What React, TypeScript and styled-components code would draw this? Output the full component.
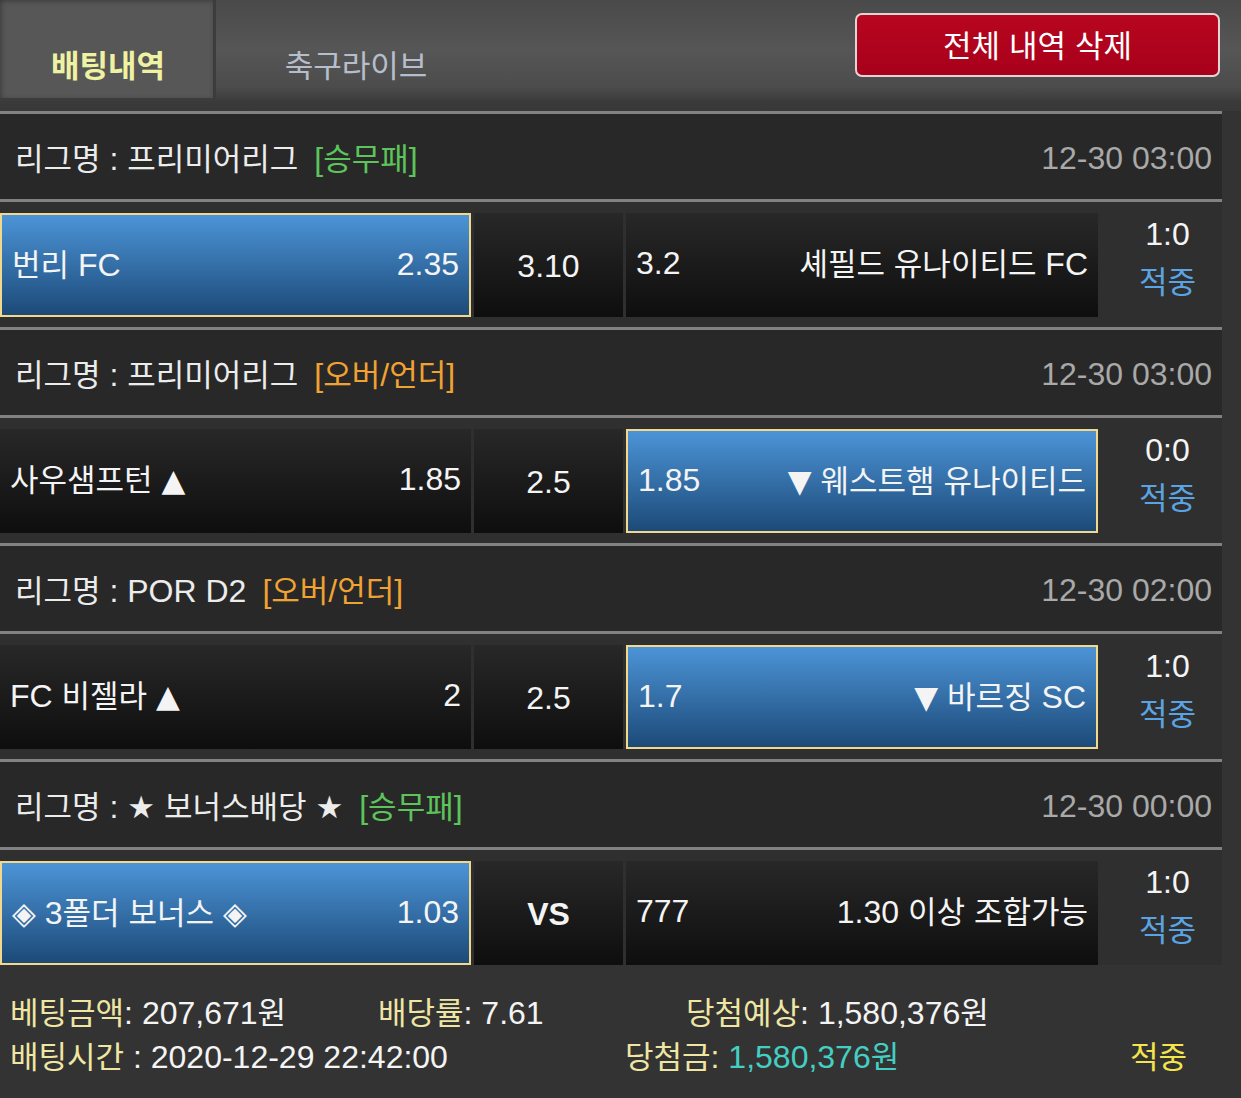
import React from "react";
import styled, { createGlobalStyle, css } from "styled-components";

const GlobalStyle = createGlobalStyle`
  html, body { margin: 0; padding: 0; background: #333333; }
  body {
    font-family: "Liberation Sans", "DejaVu Sans", "Noto Sans CJK KR", sans-serif;
    font-size: 32px;
    color: #f2f2f2;
  }
  #root { width: 1241px; }
`;

const SPLIT = /([\u1100-\u11ff\u3130-\u318f\uac00-\ud7af]+|[\u25b2\u25bc\u25c8\u2605])/;
const HANGUL = /^[\u1100-\u11ff\u3130-\u318f\uac00-\ud7af]+$/;

const Ko = styled.span`
  font-family: "Noto Sans CJK KR", sans-serif;
  font-size: 31px;
`;

const Sym = styled.span`
  font-family: "DejaVu Sans", sans-serif;
  font-size: 31px;
`;

function T({ s }: { s: string }) {
  const parts = s.split(SPLIT);
  return (
    <span>
      {parts.map((p, i) => {
        if (!p) return null;
        if (i % 2 === 1) return HANGUL.test(p) ? <Ko key={i}>{p}</Ko> : <Sym key={i}>{p}</Sym>;
        return <React.Fragment key={i}>{p}</React.Fragment>;
      })}
    </span>
  );
}

const Page = styled.div`
  width: 1241px;
  background: #333333;
  line-height: 1.2;
`;

const Header = styled.header`
  display: flex;
  align-items: flex-start;
  height: 111px;
  background: linear-gradient(#4a4a4a 0%, #565656 45%, #4c4c4c 78%, #3a3a3a 92%, #383838 100%);
`;

const Tab = styled.div<{ $active?: boolean }>`
  width: ${(p) => (p.$active ? 216 : 280)}px;
  height: 101px;
  box-sizing: border-box;
  padding-top: 30px;
  display: flex;
  align-items: center;
  justify-content: center;
  color: ${(p) => (p.$active ? "#eef2a2" : "#b6becb")};
  font-weight: ${(p) => (p.$active ? 700 : 400)};
  ${(p) =>
    p.$active &&
    css`
      background: #575757;
      box-shadow: inset -3px -3px 0 #3c3c3c, inset 0 0 6px rgba(0, 0, 0, 0.45);
    `}
`;

const DeleteButton = styled.button`
  margin: 13px 21px 0 auto;
  width: 365px;
  height: 64px;
  box-sizing: border-box;
  border: 2px solid #e4d4d6;
  border-radius: 7px;
  background: linear-gradient(#b8061f, #a8001b);
  color: #ffffff;
  font-family: inherit;
  font-size: 32px;
  display: flex;
  align-items: center;
  justify-content: center;
  padding: 0 0 4px;
  cursor: pointer;
`;

const Line = styled.div`
  width: 1222px;
  height: 3px;
  background: #828282;
`;

const LeagueRow = styled.div`
  width: 1222px;
  height: 85px;
  box-sizing: border-box;
  background: #282828;
  display: flex;
  align-items: center;
  justify-content: space-between;
  padding: 4px 10px 0 15px;
`;

const LeagueName = styled.div`
  display: flex;
  align-items: baseline;
  color: #ececec;
`;

const Tag = styled.span<{ $kind: "wdl" | "ou" }>`
  margin-left: 16px;
  color: ${(p) => (p.$kind === "wdl" ? "#5cc45a" : "#f0a232")};
`;

const DateText = styled.span`
  color: #a9a9a9;
`;

const MatchRow = styled.div<{ $last?: boolean }>`
  width: 1222px;
  height: ${(p) => (p.$last ? 115 : 125)}px;
  box-sizing: border-box;
  display: flex;
  align-items: flex-start;
  gap: 3px;
  padding-top: 11px;
  background: #2f2f2f;
`;

const Cell = styled.div<{ $w: number; $sel?: boolean; $center?: boolean }>`
  width: ${(p) => p.$w}px;
  height: 104px;
  box-sizing: border-box;
  display: flex;
  align-items: center;
  justify-content: ${(p) => (p.$center ? "center" : "space-between")};
  padding: 0 10px 4px;
  white-space: pre;
  background: linear-gradient(#282828, #0e0e0e);
  color: #f4f4f4;
  ${(p) =>
    p.$sel &&
    css`
      background: linear-gradient(#4c94d7, #1c4a78);
      border: 2px solid #f2d88c;
      padding: 0 10px 2px;
    `}
`;

const Vs = styled.span`
  font-weight: 700;
  padding-top: 6px;
`;

const DrawText = styled.span`
  padding-top: 6px;
`;

const Result = styled.div`
  flex: 1;
  height: 104px;
  display: flex;
  flex-direction: column;
  align-items: center;
  justify-content: center;
  padding: 0 0 14px 12px;
  box-sizing: border-box;
  line-height: 46px;
`;

const Score = styled.span`
  color: #f4f4f4;
`;

const Hit = styled.span`
  color: #5ba4e4;
`;

const Footer = styled.div`
  box-sizing: border-box;
  height: 133px;
  padding: 25px 0 0 10px;
`;

const FooterRow = styled.div<{ $cols: string }>`
  display: grid;
  grid-template-columns: ${(p) => p.$cols};
  height: 44px;
  align-items: center;
  white-space: nowrap;
`;

const Label = styled.span`
  color: #efe6a4;
`;

const Value = styled.span<{ $tone?: "teal" }>`
  color: ${(p) => (p.$tone === "teal" ? "#44cfc3" : "#f4f4f4")};
`;

const FinalHit = styled.span`
  color: #f4e54c;
`;

type Match = {
  league: string;
  tag: string;
  kind: "wdl" | "ou";
  date: string;
  home: string;
  homeOdd: string;
  draw: string;
  awayOdd: string;
  away: string;
  sel: "home" | "away";
  score: string;
  vs?: boolean;
};

const matches: Match[] = [
  {
    league: "리그명 : 프리미어리그",
    tag: "[승무패]",
    kind: "wdl",
    date: "12-30 03:00",
    home: "번리 FC",
    homeOdd: "2.35",
    draw: "3.10",
    awayOdd: "3.2",
    away: "셰필드 유나이티드 FC",
    sel: "home",
    score: "1:0",
  },
  {
    league: "리그명 : 프리미어리그",
    tag: "[오버/언더]",
    kind: "ou",
    date: "12-30 03:00",
    home: "사우샘프턴 ▲",
    homeOdd: "1.85",
    draw: "2.5",
    awayOdd: "1.85",
    away: "▼ 웨스트햄 유나이티드",
    sel: "away",
    score: "0:0",
  },
  {
    league: "리그명 : POR D2",
    tag: "[오버/언더]",
    kind: "ou",
    date: "12-30 02:00",
    home: "FC 비젤라 ▲",
    homeOdd: "2",
    draw: "2.5",
    awayOdd: "1.7",
    away: "▼ 바르징 SC",
    sel: "away",
    score: "1:0",
  },
  {
    league: "리그명 : ★ 보너스배당 ★",
    tag: "[승무패]",
    kind: "wdl",
    date: "12-30 00:00",
    home: "◈ 3폴더 보너스 ◈",
    homeOdd: "1.03",
    draw: "VS",
    awayOdd: "777",
    away: "1.30 이상 조합가능",
    sel: "home",
    score: "1:0",
    vs: true,
  },
];

export default function App() {
  return (
    <Page>
      <GlobalStyle />
      <Header>
        <Tab $active>
          <T s="배팅내역" />
        </Tab>
        <Tab>
          <T s="축구라이브" />
        </Tab>
        <DeleteButton>
          <T s="전체 내역 삭제" />
        </DeleteButton>
      </Header>
      {matches.map((m, i) => (
        <React.Fragment key={i}>
          <Line />
          <LeagueRow>
            <LeagueName>
              <T s={m.league} />
              <Tag $kind={m.kind}>
                <T s={m.tag} />
              </Tag>
            </LeagueName>
            <DateText>{m.date}</DateText>
          </LeagueRow>
          <Line />
          <MatchRow $last={i === matches.length - 1}>
            <Cell $w={471} $sel={m.sel === "home"}>
              <T s={m.home} />
              <span>{m.homeOdd}</span>
            </Cell>
            <Cell $w={149} $center>
              {m.vs ? <Vs>{m.draw}</Vs> : <DrawText>{m.draw}</DrawText>}
            </Cell>
            <Cell $w={472} $sel={m.sel === "away"}>
              <span>{m.awayOdd}</span>
              <T s={m.away} />
            </Cell>
            <Result>
              <Score>{m.score}</Score>
              <Hit>
                <T s="적중" />
              </Hit>
            </Result>
          </MatchRow>
        </React.Fragment>
      ))}
      <Footer>
        <FooterRow $cols="368px 308px 1fr">
          <span>
            <Label>
              <T s="베팅금액" />
            </Label>
            <Value>
              <T s=": 207,671원" />
            </Value>
          </span>
          <span>
            <Label>
              <T s="배당률" />
            </Label>
            <Value>: 7.61</Value>
          </span>
          <span>
            <Label>
              <T s="당첨예상" />
            </Label>
            <Value>
              <T s=": 1,580,376원" />
            </Value>
          </span>
        </FooterRow>
        <FooterRow $cols="615px 505px 1fr">
          <span>
            <Label>
              <T s="배팅시간" />
            </Label>
            <Value> : 2020-12-29 22:42:00</Value>
          </span>
          <span>
            <Label>
              <T s="당첨금:" />
            </Label>
            <Value $tone="teal">
              <T s=" 1,580,376원" />
            </Value>
          </span>
          <FinalHit>
            <T s="적중" />
          </FinalHit>
        </FooterRow>
      </Footer>
    </Page>
  );
}
